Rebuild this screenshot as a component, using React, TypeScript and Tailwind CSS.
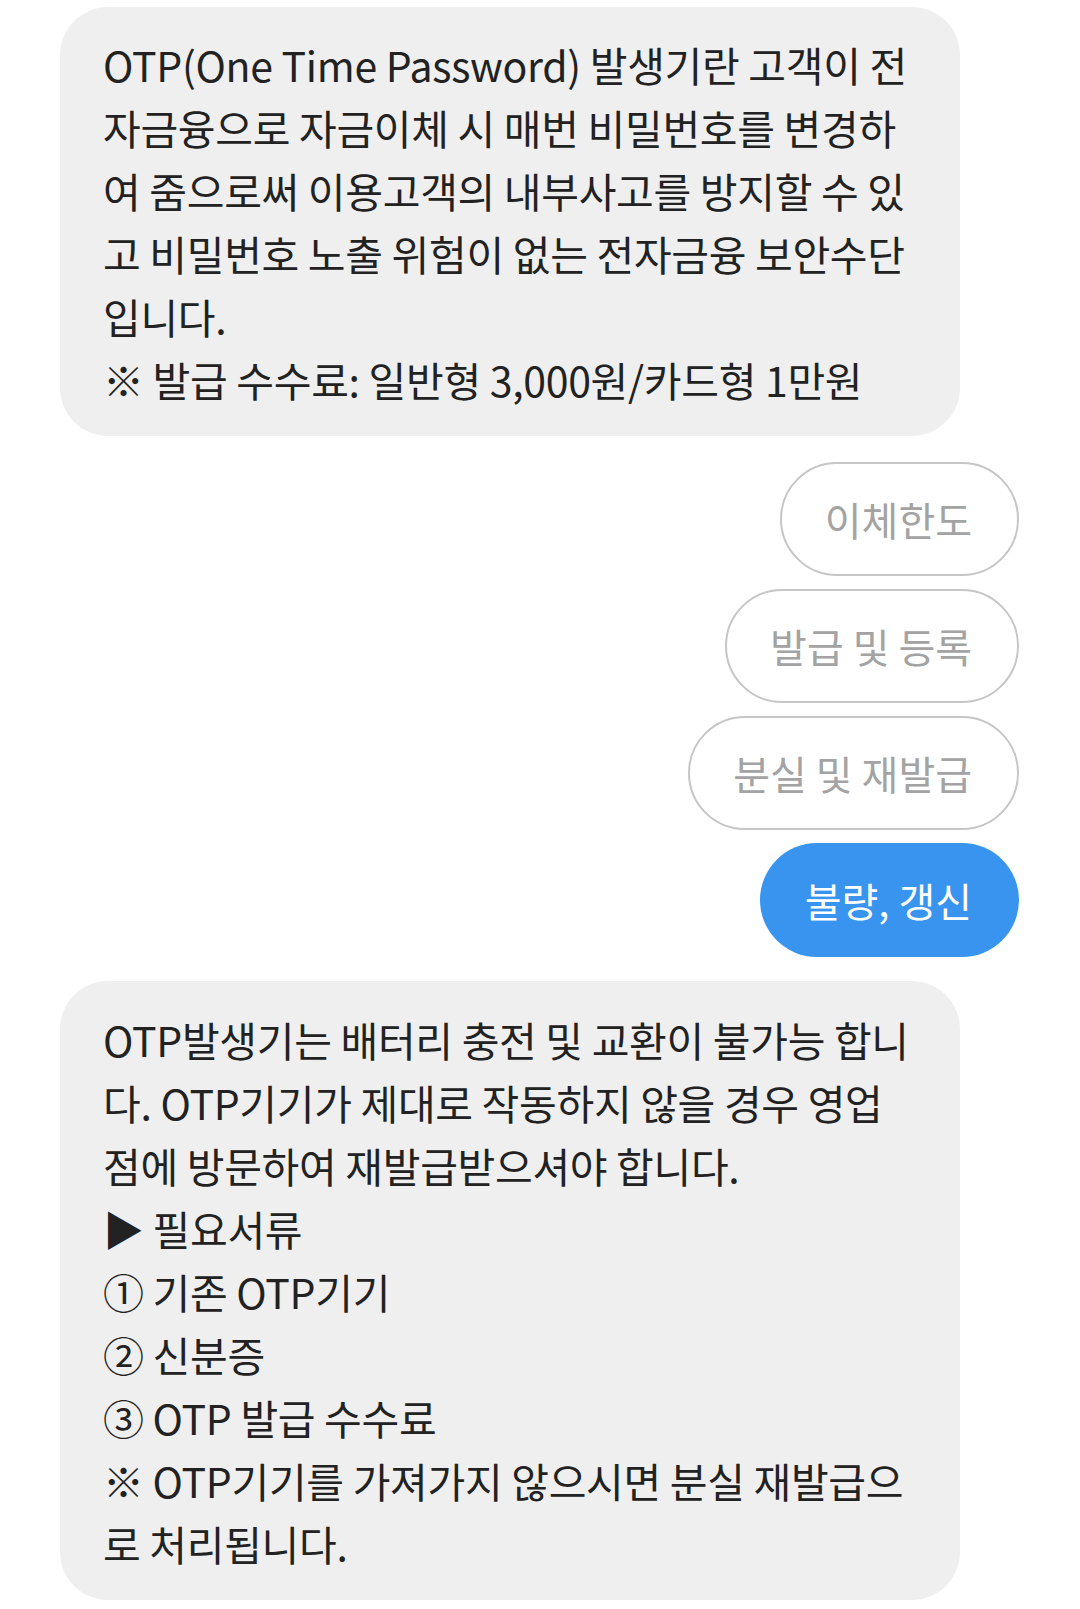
import React from "react";

const font = { fontFamily: '"Noto Sans CJK KR", "Noto Sans", sans-serif' };

const bubble1 = [
  "OTP(One Time Password) 발생기란 고객이 전",
  "자금융으로 자금이체 시 매번 비밀번호를 변경하",
  "여 줌으로써 이용고객의 내부사고를 방지할 수 있",
  "고 비밀번호 노출 위험이 없는 전자금융 보안수단",
  "입니다.",
  "※ 발급 수수료: 일반형 3,000원/카드형 1만원",
];

const bubble2 = [
  "OTP발생기는 배터리 충전 및 교환이 불가능 합니",
  "다. OTP기기가 제대로 작동하지 않을 경우 영업",
  "점에 방문하여 재발급받으셔야 합니다.",
  "▶ 필요서류",
  "① 기존 OTP기기",
  "② 신분증",
  "③ OTP 발급 수수료",
  "※ OTP기기를 가져가지 않으시면 분실 재발급으",
  "로 처리됩니다.",
];

function Bubble({ lines, className }: { lines: string[]; className?: string }) {
  return (
    <div
      className={`w-[900px] rounded-[48px] bg-[#efefef] pl-[43px] pr-[10px] text-[41px] leading-[63px] tracking-[-0.3px] text-[#222222] ${className ?? ""}`}
    >
      {lines.map((l, i) => (
        <div key={i} className="whitespace-nowrap">
          {l}
        </div>
      ))}
    </div>
  );
}

function Chip({ label, active }: { label: string; active?: boolean }) {
  return (
    <div
      className={
        active
          ? "flex h-[114px] items-center rounded-full bg-[#3894ee] pl-[45px] pr-[47px] text-[40px] text-white"
          : "flex h-[114px] items-center rounded-full border-2 border-[#c6c6c6] bg-white pl-[43px] pr-[45px] text-[40px] text-[#a3a3a3]"
      }
    >
      {label}
    </div>
  );
}

export default function App() {
  return (
    <div className="min-h-[1609px] w-[1080px] bg-white pt-[7px] pl-[60px] pr-[61px]" style={font}>
      <Bubble lines={bubble1} className="pt-[26px] pb-[25px]" />
      <div className="mt-[26px] flex flex-col items-end gap-[13px]">
        <Chip label="이체한도" />
        <Chip label="발급 및 등록" />
        <Chip label="분실 및 재발급" />
        <Chip label="불량, 갱신" active />
      </div>
      <Bubble lines={bubble2} className="mt-[24px] pt-[27px] pb-[25px]" />
    </div>
  );
}
